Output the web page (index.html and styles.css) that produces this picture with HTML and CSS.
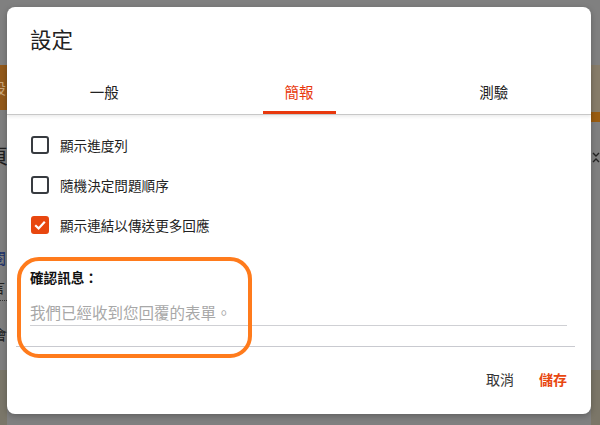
FILE: index.html
```html
<!DOCTYPE html>
<html lang="zh-Hant">
<head>
<meta charset="utf-8">
<title>設定</title>
<link rel="stylesheet" href="styles.css">
</head>
<body>
<div class="backdrop">
  <div class="strip strip-left">
    <span class="peek peek-band">設</span>
    <span class="peek peek-big">頁</span>
    <span class="peek peek-link">閱</span>
    <span class="peek peek-small">言</span>
    <span class="peek peek-dots"></span>
    <span class="peek peek-small2">會</span>
  </div>
  <div class="middle"></div>
  <div class="strip strip-right">
    <svg class="chev" width="8" height="16" viewBox="0 0 8 16"><path d="M1 3 L4 6 L7 3 M1 12 L4 9 L7 12" fill="none" stroke="#222" stroke-width="1.4"/></svg>
  </div>
</div>

<div class="dialog">
  <h1 class="title">設定</h1>
  <div class="tabs">
    <div class="tab"><span class="tab-label">一般</span></div>
    <div class="tab active"><span class="tab-label">簡報</span></div>
    <div class="tab"><span class="tab-label">測驗</span></div>
  </div>
  <div class="body">
    <label class="row"><span class="box"></span><span class="text">顯示進度列</span></label>
    <label class="row"><span class="box"></span><span class="text">隨機決定問題順序</span></label>
    <label class="row"><span class="box checked"><svg width="14" height="14" viewBox="0 0 14 14"><path d="M2.2 7.2 L5.6 10.4 L11.8 3.8" fill="none" stroke="#fff" stroke-width="2.2"/></svg></span><span class="text">顯示連結以傳送更多回應</span></label>
    <div class="confirm-label">確認訊息：</div>
    <div class="confirm-input">我們已經收到您回覆的表單。</div>
  </div>
  <div class="footer">
    <span class="btn">取消</span>
    <span class="btn primary">儲存</span>
  </div>
  <div class="highlight"></div>
</div>
</body>
</html>
```

FILE: styles.css
```css
* { box-sizing: border-box; }
html, body {
  margin: 0;
  padding: 0;
  width: 600px;
  height: 425px;
  overflow: hidden;
  font-family: "Noto Sans CJK TC", "Noto Sans", sans-serif;
}
body { position: relative; background: #808080; }

.backdrop {
  display: flex;
  width: 600px;
  height: 425px;
}
.strip { position: relative; overflow: hidden; }
.strip-left {
  width: 7px;
  background: linear-gradient(to bottom,
    #808080 0, #808080 65px,
    #93591a 65px, #93591a 110px,
    #7f7f7f 110px, #7f7f7f 370px,
    #7a7669 370px, #7a7669 425px);
}
.middle { flex: 1; background: #808080; }
.strip-right {
  width: 9px;
  background: linear-gradient(to bottom,
    #808080 0, #808080 65px,
    #877c69 65px, #877c69 112px,
    #9a5c10 112px, #9a5c10 122px,
    #808080 122px, #808080 370px,
    #7b7668 370px, #7b7668 425px);
}
.peek {
  position: absolute;
  white-space: nowrap;
  line-height: 1;
}
.peek-band { left: -9px; top: 80px; font-size: 15px; color: #c9a77a; }
.peek-big { left: -12px; top: 146px; font-size: 20px; color: #1f1f1f; }
.peek-link { left: -9px; top: 250px; font-size: 15px; color: #1b2f6a; }
.peek-small { left: -9px; top: 280px; font-size: 14px; color: #222; }
.peek-dots { left: 0; top: 300px; width: 7px; border-top: 1px dotted #333; }
.peek-small2 { left: -7px; top: 327px; font-size: 14px; color: #222; }
.chev { position: absolute; left: 1px; top: 150px; }

.dialog {
  position: absolute;
  left: 7px;
  top: 7px;
  width: 584px;
  height: 407px;
  background: #fff;
  border-radius: 8px;
  box-shadow: 0 2px 6px rgba(0,0,0,0.25);
  display: flex;
  flex-direction: column;
}
.title {
  margin: 0;
  padding: 17px 23px 16px;
  font-size: 21.5px;
  line-height: 30px;
  font-weight: 400;
  color: #212121;
}
.tabs {
  display: flex;
  height: 45px;
  border-bottom: 1px solid #c8c8c8;
  box-shadow: 0 2px 3px rgba(0,0,0,0.07);
}
.tab {
  flex: 1;
  display: flex;
  justify-content: center;
}
.tab-label {
  display: block;
  padding: 11px 22px 0;
  height: 44px;
  font-size: 14.5px;
  line-height: 22px;
  color: #222;
}
.tab.active .tab-label {
  color: #e8380d;
  border-bottom: 3px solid #e8380d;
  border-radius: 2px 2px 0 0;
}

.body {
  padding: 10px 24px 0 23px;
  display: flex;
  flex-direction: column;
}
.row {
  display: flex;
  align-items: center;
  height: 40px;
  gap: 11px;
}
.box {
  width: 18px;
  height: 18px;
  margin-left: 1px;
  border: 2px solid #383b40;
  border-radius: 3px;
  display: flex;
  align-items: center;
  justify-content: center;
}
.box.checked {
  background: #e8470f;
  border-color: #e8470f;
}
.text {
  font-size: 13.6px;
  line-height: 20px;
  color: #222;
}
.confirm-label {
  margin-top: 22px;
  font-size: 13.6px;
  line-height: 20px;
  font-weight: 700;
  color: #111;
}
.confirm-input {
  margin-top: 11px;
  padding-top: 2px;
  height: 28px;
  font-size: 15.5px;
  line-height: 24px;
  color: #a8a8a8;
  border-bottom: 1px solid #cfd0d4;
}
.footer {
  margin: 20px 16px 0 9px;
  border-top: 1px solid #c9cad0;
  display: flex;
  justify-content: flex-end;
  align-items: center;
  gap: 25px;
  padding: 21px 8px 0 0;
}
.btn {
  font-size: 14px;
  line-height: 22px;
  color: #333;
}
.btn.primary {
  color: #e8470f;
  font-weight: 700;
}
.highlight {
  position: absolute;
  left: 10px;
  top: 250px;
  width: 235px;
  height: 101px;
  border: 4px solid #ff7b1c;
  border-radius: 22px;
  pointer-events: none;
}
```
